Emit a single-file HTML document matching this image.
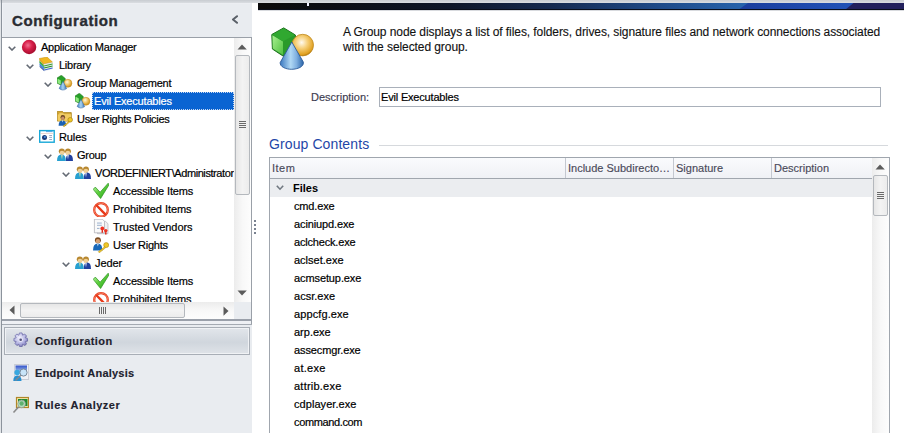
<!DOCTYPE html>
<html><head><meta charset="utf-8">
<style>
*{box-sizing:border-box;margin:0;padding:0}
html,body{width:904px;height:433px;overflow:hidden;background:#fff;font-family:"Liberation Sans",sans-serif;font-size:11px;color:#000}
.a{position:absolute;white-space:nowrap}
.tr{position:absolute;height:18px;line-height:18px;white-space:nowrap;letter-spacing:-0.25px;color:#000;-webkit-text-stroke:0.2px #000}
.sel{-webkit-text-stroke:0.2px #fff}
.chev{position:absolute;width:8px;height:5px}
.sel{background:#0a64d2;color:#fff;outline:1px dotted #c8d8f0;outline-offset:-1px;padding-left:2px}
.ico{position:absolute;width:16px;height:16px}
.desc{left:343px;font-size:12px;line-height:15px;color:#111;letter-spacing:-0.08px;-webkit-text-stroke:0.12px #111}
.fr{position:absolute;height:18px;line-height:18px;letter-spacing:-0.15px;color:#000;-webkit-text-stroke:0.2px #000}
.hc{position:absolute;line-height:18px;color:#4a4a5a;letter-spacing:-0.2px;-webkit-text-stroke:0.15px #4a4a5a}
.nav{position:absolute;font-weight:bold;font-size:11px;line-height:16px;color:#1e222e;letter-spacing:0.22px;-webkit-text-stroke:0.15px #1e222e}
</style></head><body>
<svg width="0" height="0" style="position:absolute">
<defs>
<radialGradient id="gRed" cx="0.42" cy="0.38" r="0.65"><stop offset="0" stop-color="#f07090"/><stop offset="0.45" stop-color="#d8204a"/><stop offset="1" stop-color="#a00a2a"/></radialGradient>
<radialGradient id="gGold" cx="0.4" cy="0.35" r="0.65"><stop offset="0" stop-color="#fff6dc"/><stop offset="0.5" stop-color="#f2c868"/><stop offset="1" stop-color="#d09018"/></radialGradient>
<linearGradient id="gCone" x1="0" x2="1"><stop offset="0" stop-color="#3f7fc0"/><stop offset="0.5" stop-color="#a8d4f4"/><stop offset="1" stop-color="#3a70b0"/></linearGradient>
<linearGradient id="gCheck" x1="0" y1="0" x2="1" y2="1"><stop offset="0" stop-color="#c8f8b0"/><stop offset="0.45" stop-color="#60d040"/><stop offset="1" stop-color="#20a010"/></linearGradient>
<symbol id="iApp" viewBox="0 0 16 16"><circle cx="8.1" cy="8" r="7.2" fill="url(#gRed)"/></symbol>
<symbol id="iBooks" viewBox="0 0 16 16">
<path d="M0.3 1.5 L8.1 0 L13.6 5.1 L13.6 12 L5.2 14.2 L0.6 9.5Z" fill="#e8e8ec"/>
<path d="M0.3 1.5 L8.1 0 L13.4 5 L4.6 6.8Z" fill="#f0b820" stroke="#c89010" stroke-width=".5"/>
<path d="M0.3 1.6 L4.6 6.8 L5 8.2 L0.5 3.5Z" fill="#e0a010"/>
<path d="M0.4 3.8 L5 8.6 L5 10.2 L0.5 6Z" fill="#30a830"/>
<path d="M0.5 6.2 L5 10.6 L5.1 12.2 L0.6 8.2Z" fill="#2a80e0"/>
<path d="M0.6 8.4 L5.1 12.4 L5.2 14.2 L0.7 10Z" fill="#4060b0"/>
<path d="M5 8.4 L13.6 6.4 L13.6 7.4 L5 9.4Z" fill="#30a030"/>
<path d="M5 10.4 L13.6 8.4 L13.6 9.4 L5 11.4Z" fill="#209020"/>
<path d="M5.1 12.4 L13.6 10.4 L13.6 11.6 L5.2 13.6Z" fill="#3a6ad0"/>
</symbol>
<symbol id="iGrp" viewBox="0 0 16 16">
<path d="M0 3 L4.4 0.2 L8.3 3.5 L8.3 8.5 L3.5 9.9 L0 8.1Z" fill="#28a028" stroke="#1a6a1a" stroke-width=".5"/>
<path d="M0.5 3.5 L3.8 5.5 L3.8 9.4 L0.5 7.9Z" fill="#90e880"/>
<circle cx="10.9" cy="8.3" r="4" fill="url(#gGold)" stroke="#c08a20" stroke-width=".5"/>
<path d="M6 6.2 L2.1 13.4 Q5.8 16.6 9.7 13.6Z" fill="url(#gCone)" stroke="#3060a0" stroke-width=".5"/>
</symbol>
<symbol id="iPol" viewBox="0 0 16 16">
<path d="M0.3 0.3 h5 l1.2 1.3 h7.8 v8.5 h-14z" fill="#d8a830" stroke="#a07810" stroke-width=".7"/>
<path d="M2 1.8 h4 l1 1 h6.8 v7 h-11.8z" fill="#f0d070" stroke="#c09020" stroke-width=".4"/>
<path d="M0.8 3.4 h13.2 v6.4 h-13.2z" fill="#f2cc60"/>
<circle cx="5.8" cy="6.4" r="2.3" fill="#6a4420"/>
<circle cx="5.8" cy="7.3" r="1.7" fill="#c89068"/>
<path d="M1.6 14.8 Q1.6 9.4 5.5 9.4 Q9.2 9.4 9.2 14.8Z" fill="#1a62b4"/>
<path d="M5 9.5 L6.1 9.5 L5.5 11.5Z" fill="#fff"/>
<circle cx="13.2" cy="8.8" r="2.3" fill="#f0c828" stroke="#a88010" stroke-width=".7"/>
<path d="M11.8 10.3 L6.2 15 L7 15.8 L12.6 11.1Z" fill="#f0c828" stroke="#a88010" stroke-width=".5"/>
</symbol>
<symbol id="iRules" viewBox="0 0 16 16">
<rect x="0.7" y="1.6" width="14.5" height="11.6" fill="#fff" stroke="#18a8d8" stroke-width="1.4"/>
<rect x="1.4" y="4" width="13.1" height="0.7" fill="#e0c8c0"/>
<rect x="7" y="2.3" width="6.6" height="0.8" fill="#2890e0"/>
<circle cx="5.5" cy="8.4" r="2.5" fill="#1a3a78"/>
<circle cx="5.9" cy="8" r="1" fill="#4a90e0"/>
<rect x="10.2" y="6.1" width="2.8" height="0.9" fill="#8aa0c0"/><rect x="10.2" y="7.9" width="2.8" height="0.9" fill="#8aa0c0"/><rect x="10.2" y="10" width="2.8" height="0.9" fill="#8aa0c0"/>
</symbol>
<symbol id="iPeople" viewBox="0 0 16 16">
<ellipse cx="4.8" cy="4.3" rx="3" ry="2.8" fill="#b88830"/>
<ellipse cx="11" cy="4.3" rx="2.9" ry="2.8" fill="#b88830"/>
<circle cx="5" cy="6" r="2.3" fill="#f0d098"/>
<circle cx="10.9" cy="6" r="2.3" fill="#f0d098"/>
<path d="M0 14 Q0 7.6 4.6 7.6 Q8.8 7.6 8.8 14Z" fill="#28a0d0"/>
<path d="M8.8 14 Q8.8 7.6 12.2 7.6 Q16 7.6 16 14Z" fill="#2040a0"/>
<path d="M4.2 7.8 L5.6 7.8 L5 12.5Z" fill="#f8e8a0"/><path d="M10.3 7.8 L11.7 7.8 L11 12.5Z" fill="#fff"/>
</symbol>
<symbol id="iCheck" viewBox="0 0 16 16">
<path d="M0.2 6.3 L2.3 4.1 L7.1 9.2 L15.2 0.2 L15.9 2 L7.6 15.5 Z" fill="url(#gCheck)" stroke="#2a9020" stroke-width=".7" stroke-linejoin="round"/>
</symbol>
<symbol id="iProh" viewBox="0 0 16 16">
<circle cx="8" cy="8.9" r="6.8" fill="#fff" stroke="#e83818" stroke-width="2.2"/>
<circle cx="8" cy="8.9" r="6.8" fill="none" stroke="#ffb8a0" stroke-width=".5"/>
<path d="M3.2 4 L12.8 13.8" stroke="#e83818" stroke-width="2.4"/>
</symbol>
<symbol id="iTrust" viewBox="0 0 16 16">
<path d="M4.5 2.4 h8 l2.5 2.3 v10 h-10.5z" fill="#f0f0f2" stroke="#a8a8b0" stroke-width=".6"/>
<path d="M1.4 0.2 h8 l2.1 2.1 v11.5 h-10.1z" fill="#fafafa" stroke="#9a9aa2" stroke-width=".6"/>
<rect x="4" y="3.6" width="4.8" height=".9" fill="#90a8c8"/><rect x="4" y="5.8" width="4.8" height=".9" fill="#90a8c8"/><rect x="4" y="8.9" width="2.5" height=".9" fill="#90a8c8"/>
<circle cx="9.3" cy="9.4" r="1.9" fill="#f03020"/>
<path d="M8.7 10.5 L8.5 13.8 L10.1 13.8 L9.9 10.5Z" fill="#e02818"/>
<circle cx="12.8" cy="11.6" r="1.7" fill="#f03020"/>
<path d="M12.2 12.6 L12 15.5 L13.6 15.5 L13.4 12.6Z" fill="#e02818"/>
</symbol>
<symbol id="iRight" viewBox="0 0 16 16">
<circle cx="4.9" cy="3.2" r="3" fill="#7a4a20"/>
<circle cx="4.9" cy="4.2" r="2.2" fill="#d8a070"/>
<path d="M0 13.5 Q0 6.6 4.8 6.6 Q9.4 6.6 9.4 13.5Z" fill="#1a68b8"/>
<path d="M4.2 6.8 L5.6 6.8 L4.9 9.5Z" fill="#fff"/>
<circle cx="13.2" cy="8.1" r="2.5" fill="#f0c828" stroke="#b08a10" stroke-width=".6"/>
<path d="M11.6 9.8 L5.3 14.7 L6.3 15.8 L12.6 10.8Z" fill="#f0c828" stroke="#b08a10" stroke-width=".5"/>
</symbol>
<symbol id="iChev" viewBox="0 0 8 5"><path d="M0.7 0.7 L4 4 L7.3 0.7" fill="none" stroke="#646a74" stroke-width="1.6"/></symbol>
<radialGradient id="gGoldB" cx="0.45" cy="0.38" r="0.62"><stop offset="0" stop-color="#fffaf0"/><stop offset="0.45" stop-color="#f6cf78"/><stop offset="0.9" stop-color="#e0a020"/><stop offset="1" stop-color="#b07810"/></radialGradient>
<linearGradient id="gConeB" x1="0" x2="1"><stop offset="0" stop-color="#3a78c0"/><stop offset="0.45" stop-color="#b0d8f4"/><stop offset="0.7" stop-color="#80b0e0"/><stop offset="1" stop-color="#2a64a8"/></linearGradient>
<linearGradient id="gCubeL" x1="0" y1="0" x2="1" y2="1"><stop offset="0" stop-color="#a8f090"/><stop offset="1" stop-color="#50c040"/></linearGradient>
<radialGradient id="gGear" cx="0.4" cy="0.35" r="0.7"><stop offset="0" stop-color="#f0f0fc"/><stop offset="0.6" stop-color="#b8b8e4"/><stop offset="1" stop-color="#7a78b8"/></radialGradient>
<linearGradient id="gScreen" x1="0" y1="0" x2="0" y2="1"><stop offset="0" stop-color="#3050c8"/><stop offset="1" stop-color="#a8c8f0"/></linearGradient>
<symbol id="iGrpBig" viewBox="0 0 52 48">
<path d="M5.8 10.5 L17.7 3.9 L29.4 11 L29.4 24 L17 32 L6.4 25Z" fill="#2a9a2a" stroke="#1a701a" stroke-width="1"/>
<path d="M6.4 11.3 L17 17.5 L17 31 L6.8 24.5Z" fill="url(#gCubeL)"/>
<path d="M6.4 10.6 L17.7 4.5 L28.8 11 L17 17.3Z" fill="#30a830"/>
<circle cx="36.7" cy="21.1" r="10.8" fill="url(#gGoldB)" stroke="#c08a20" stroke-width="0.8"/>
<path d="M25.8 18 L14.2 38.5 C13.6 42.8 20 45.4 25.8 45.3 C31.6 45.2 38 42.8 37.4 38.2Z" fill="url(#gConeB)" stroke="#2a5a98" stroke-width="0.9"/>
</symbol>
<symbol id="iGear" viewBox="0 0 17 17">
<g transform="translate(7.7 7.7)">
<path d="M-1.84 -4.54 L-1.32 -6.77 L1.32 -6.77 L1.84 -4.54 L1.91 -4.51 L3.86 -5.72 L5.72 -3.86 L4.51 -1.91 L4.54 -1.84 L6.77 -1.32 L6.77 1.32 L4.54 1.84 L4.51 1.91 L5.72 3.86 L3.86 5.72 L1.91 4.51 L1.84 4.54 L1.32 6.77 L-1.32 6.77 L-1.84 4.54 L-1.91 4.51 L-3.86 5.72 L-5.72 3.86 L-4.51 1.91 L-4.54 1.84 L-6.77 1.32 L-6.77 -1.32 L-4.54 -1.84 L-4.51 -1.91 L-5.72 -3.86 L-3.86 -5.72 L-1.91 -4.51Z" transform="translate(0.6 0.6)" fill="#6a6890" opacity=".45"/>
<path d="M-1.84 -4.54 L-1.32 -6.77 L1.32 -6.77 L1.84 -4.54 L1.91 -4.51 L3.86 -5.72 L5.72 -3.86 L4.51 -1.91 L4.54 -1.84 L6.77 -1.32 L6.77 1.32 L4.54 1.84 L4.51 1.91 L5.72 3.86 L3.86 5.72 L1.91 4.51 L1.84 4.54 L1.32 6.77 L-1.32 6.77 L-1.84 4.54 L-1.91 4.51 L-3.86 5.72 L-5.72 3.86 L-4.51 1.91 L-4.54 1.84 L-6.77 1.32 L-6.77 -1.32 L-4.54 -1.84 L-4.51 -1.91 L-5.72 -3.86 L-3.86 -5.72 L-1.91 -4.51Z" fill="url(#gGear)" stroke="#6a68a8" stroke-width=".7"/>
<circle r="2.2" fill="#e8e8f8"/>
<circle r="1.3" fill="#505078"/>
</g>
</symbol>
<symbol id="iEnd" viewBox="0 0 17 17">
<rect x="2.7" y="0.5" width="14" height="15" fill="#f0f2f6" stroke="#c0c4cc" stroke-width=".8"/>
<rect x="3.5" y="1.5" width="11.5" height="6.5" fill="url(#gScreen)"/>
<circle cx="5.2" cy="8.5" r="2.8" fill="#38a8e0"/>
<path d="M1.3 17 Q1.3 11.5 5.5 11.5 Q9.5 11.5 9.5 17Z" fill="#2890d0"/>
<circle cx="11.5" cy="8.5" r="3.6" fill="#c8e4f8" stroke="#7a8a9a" stroke-width="1"/>
<path d="M8.8 11.3 L3.5 16.5" stroke="#808890" stroke-width="1.4"/>
</symbol>
<symbol id="iRA" viewBox="0 0 17 18">
<rect x="4.5" y="1.5" width="12" height="10" fill="#f8e8a8" stroke="#b0862a" stroke-width="1.2"/>
<rect x="6" y="3" width="9.5" height="7" fill="#208a30"/>
<circle cx="9.6" cy="7.9" r="3.8" fill="#b8e0c0" stroke="#8a9a90" stroke-width=".8"/>
<circle cx="9.6" cy="7.5" r="2.2" fill="#60b070"/>
<path d="M6.5 11 L1.5 16.5" stroke="#8a8a8a" stroke-width="1.6"/>
</symbol>
</defs></svg>

<div class="a" style="left:0;top:0;width:252px;height:433px;background:#e9ecf0"></div>
<div class="a" style="left:0;top:0;width:1px;height:433px;background:#e2e5e8"></div>
<div class="a" style="left:0;top:0;width:904px;height:3px;background:linear-gradient(#c8ccd1,#dadde1)"></div>
<div class="a" style="left:2px;top:3px;width:250px;height:1px;background:#eceef2"></div>
<div class="a" style="left:2px;top:3px;width:1px;height:34px;background:#f0f2f6"></div>
<div class="a" style="left:1px;top:0;width:1px;height:433px;background:#8c939c"></div>
<div class="a" style="left:12px;top:10.5px;font-weight:bold;font-size:15px;line-height:20px;color:#2a2c32;letter-spacing:0.62px;-webkit-text-stroke:0.4px #2a2c32">Configuration</div>
<svg class="a" style="left:231px;top:15px" width="8" height="9"><path d="M6 1.2 L2 4.5 L6 7.8" fill="none" stroke="#5a6068" stroke-width="2" stroke-linecap="round" stroke-linejoin="round"/></svg>
<div class="a" style="left:2px;top:37px;width:250px;height:1px;background:#9aa0a8"></div>
<div class="a" style="left:251px;top:37px;width:1px;height:288px;background:#9aa0a8"></div>
<div class="a" style="left:2px;top:38px;width:249px;height:281px;background:#fff;overflow:hidden" id="tree">
<svg class="chev" style="left:6px;top:8px"><use href="#iChev"/></svg>
<svg class="ico" style="left:19px;top:1px"><use href="#iApp"/></svg>
<div class="tr" style="left:39px;top:0px;letter-spacing:-0.25px">Application Manager</div>
<svg class="chev" style="left:24px;top:26px"><use href="#iChev"/></svg>
<svg class="ico" style="left:37px;top:19px"><use href="#iBooks"/></svg>
<div class="tr" style="left:57px;top:18px;letter-spacing:-0.25px">Library</div>
<svg class="chev" style="left:42px;top:44px"><use href="#iChev"/></svg>
<svg class="ico" style="left:55px;top:37px"><use href="#iGrp"/></svg>
<div class="tr" style="left:75px;top:36px;letter-spacing:-0.22px">Group Management</div>
<svg class="ico" style="left:73px;top:55px"><use href="#iGrp"/></svg>
<div class="tr sel" style="left:90px;top:54px;width:142px;letter-spacing:-0.18px">Evil Executables</div>
<svg class="ico" style="left:55px;top:73px"><use href="#iPol"/></svg>
<div class="tr" style="left:75px;top:72px;letter-spacing:-0.3px">User Rights Policies</div>
<svg class="chev" style="left:24px;top:98px"><use href="#iChev"/></svg>
<svg class="ico" style="left:37px;top:91px"><use href="#iRules"/></svg>
<div class="tr" style="left:57px;top:90px;letter-spacing:-0.1px">Rules</div>
<svg class="chev" style="left:42px;top:116px"><use href="#iChev"/></svg>
<svg class="ico" style="left:55px;top:109px"><use href="#iPeople"/></svg>
<div class="tr" style="left:75px;top:108px;letter-spacing:-0.25px">Group</div>
<svg class="chev" style="left:60px;top:134px"><use href="#iChev"/></svg>
<svg class="ico" style="left:73px;top:127px"><use href="#iPeople"/></svg>
<div class="tr" style="left:93px;top:126px;letter-spacing:-0.42px">VORDEFINIERT\Administrator</div>
<svg class="ico" style="left:91px;top:145px"><use href="#iCheck"/></svg>
<div class="tr" style="left:111px;top:144px;letter-spacing:-0.15px">Accessible Items</div>
<svg class="ico" style="left:91px;top:163px"><use href="#iProh"/></svg>
<div class="tr" style="left:111px;top:162px;letter-spacing:-0.06px">Prohibited Items</div>
<svg class="ico" style="left:91px;top:181px"><use href="#iTrust"/></svg>
<div class="tr" style="left:111px;top:180px;letter-spacing:-0.05px">Trusted Vendors</div>
<svg class="ico" style="left:91px;top:199px"><use href="#iRight"/></svg>
<div class="tr" style="left:111px;top:198px;letter-spacing:-0.25px">User Rights</div>
<svg class="chev" style="left:60px;top:224px"><use href="#iChev"/></svg>
<svg class="ico" style="left:73px;top:217px"><use href="#iPeople"/></svg>
<div class="tr" style="left:93px;top:216px;letter-spacing:-0.1px">Jeder</div>
<svg class="ico" style="left:91px;top:235px"><use href="#iCheck"/></svg>
<div class="tr" style="left:111px;top:234px;letter-spacing:-0.15px">Accessible Items</div>
<svg class="ico" style="left:91px;top:253px"><use href="#iProh"/></svg>
<div class="tr" style="left:111px;top:252px;letter-spacing:-0.06px">Prohibited Items</div>
<div class="a" style="left:232px;top:0;width:17px;height:264px;background:linear-gradient(90deg,#ececec,#f8f8f8 50%,#fdfdfd)"></div>
<svg class="a" style="left:235px;top:6px" width="11" height="6"><path d="M0.5 5.5 L5 0.5 L9.8 5.5Z" fill="#5c5c5c"/></svg>
<div class="a" style="left:233px;top:17px;width:15px;height:140px;border:1px solid #b4b8bd;border-radius:2px;background:linear-gradient(90deg,#e6e6e6,#f3f3f3 50%,#ececec)"></div>
<div class="a" style="left:237px;top:83px;width:7px;height:1px;background:#6a6a6a;box-shadow:0 2px 0 #6a6a6a,0 4px 0 #6a6a6a,0 6px 0 #6a6a6a"></div>
<svg class="a" style="left:235px;top:252px" width="11" height="6"><path d="M0.5 0.5 L5 5.5 L9.8 0.5Z" fill="#5c5c5c"/></svg>
<div class="a" style="left:0;top:264px;width:232px;height:17px;background:linear-gradient(#ececec,#f8f8f8 50%,#fdfdfd)"></div>
<svg class="a" style="left:7px;top:267px" width="6" height="11"><path d="M5.5 0.5 L0.5 5 L5.5 9.8Z" fill="#5c5c5c"/></svg>
<div class="a" style="left:18px;top:265px;width:165px;height:15px;border:1px solid #b4b8bd;border-radius:2px;background:linear-gradient(#e6e6e6,#f3f3f3 50%,#ececec)"></div>
<div class="a" style="left:97px;top:269px;width:1px;height:7px;background:#6a6a6a;box-shadow:2px 0 0 #6a6a6a,4px 0 0 #6a6a6a,6px 0 0 #6a6a6a"></div>
<svg class="a" style="left:221px;top:267.5px" width="6" height="11"><path d="M0.5 0.5 L5.5 5 L0.5 9.8Z" fill="#5c5c5c"/></svg>
<div class="a" style="left:232px;top:264px;width:17px;height:17px;background:#e9ecf0"></div>
</div>
<div class="a" style="left:2px;top:319px;width:250px;height:2px;background:#9aa0aa"></div>
<div class="a" style="left:2px;top:321px;width:249px;height:3px;background:#eef0f4"></div>
<div class="a" style="left:2px;top:324px;width:250px;height:1px;background:#a4aab2"></div>
<div class="a" style="left:4px;top:327px;width:246px;height:28px;border:1px solid #a8aeb6;background:linear-gradient(#e2e6eb,#d0d6dd 55%,#dfe3e8);box-shadow:inset 0 0 0 1px #f0f2f5"></div>
<svg class="a" style="left:13px;top:332px" width="17" height="17"><use href="#iGear"/></svg>
<div class="nav" style="left:35px;top:333px;letter-spacing:0.42px">Configuration</div>
<svg class="a" style="left:12px;top:364px" width="17" height="17"><use href="#iEnd"/></svg>
<div class="nav" style="left:35px;top:365px">Endpoint Analysis</div>
<svg class="a" style="left:12px;top:396px" width="17" height="18"><use href="#iRA"/></svg>
<div class="nav" style="left:35px;top:397px;letter-spacing:0.48px">Rules Analyzer</div>
<div class="a" style="left:258px;top:3px;width:646px;height:7px;background:linear-gradient(90deg,#0a0a0b 0%,#0b0d14 12%,#0e1628 30%,#15294e 45%,#1e4a88 62%,#2a6cb8 80%,#3080cc 100%)"></div>
<div class="a" style="left:738px;top:3px;width:166px;height:7px;clip-path:polygon(10px 0,100% 0,100% 100%,0 100%);background:linear-gradient(90deg,#1a3c9c,#2050b4 60%,#2458c0)"></div>
<div class="a" style="left:845px;top:3px;width:59px;height:7px;clip-path:polygon(8.5px 0,100% 0,100% 100%,0 100%);background:#22205c"></div>
<div class="a" style="left:258px;top:9px;width:646px;height:1px;background:#0a0e1a"></div>
<div class="a" style="left:258px;top:10px;width:646px;height:1px;background:#d8dade"></div>
<div class="a" style="left:307px;top:3px;width:2px;height:3px;background:#f0f0ff"></div>
<svg class="a" style="left:266px;top:24px" width="52" height="48"><use href="#iGrpBig"/></svg>
<div class="a desc" style="top:25px">A Group node displays a list of files, folders, drives, signature files and network connections associated</div>
<div class="a desc" style="top:40px">with the selected group.</div>
<div class="a" style="left:311px;top:88px;line-height:18px;color:#3c3c50;letter-spacing:0px;-webkit-text-stroke:0.15px #3c3c50">Description:</div>
<div class="a" style="left:379px;top:87px;width:502px;height:20px;border:1px solid #a9b0ba;background:#fff"></div>
<div class="a" style="left:381px;top:88px;line-height:18px;letter-spacing:-0.18px;-webkit-text-stroke:0.2px #000">Evil Executables</div>
<div class="a" style="left:269px;top:135px;font-size:14px;line-height:18px;color:#1f47a8;letter-spacing:0.1px">Group Contents</div>
<div class="a" style="left:379px;top:145px;width:509px;height:1px;background:#d6d9dd"></div>
<div class="a" style="left:269px;top:157px;width:621px;height:276px;border:1px solid #a0a6ae;border-bottom:none;background:#fff"></div>
<div class="a" style="left:270px;top:158px;width:602px;height:20px;background:linear-gradient(#fafbfd,#eff1f5)"></div>
<div class="a" style="left:270px;top:178px;width:602px;height:1px;background:#a0a6ae"></div>
<div class="a" style="left:565px;top:158px;width:1px;height:20px;background:#c4c8d0"></div>
<div class="a" style="left:673px;top:158px;width:1px;height:20px;background:#c4c8d0"></div>
<div class="a" style="left:771px;top:158px;width:1px;height:20px;background:#c4c8d0"></div>
<div class="hc" style="left:272px;top:159px;letter-spacing:0.5px">Item</div>
<div class="hc" style="left:568px;top:159px;letter-spacing:0px">Include Subdirecto…</div>
<div class="hc" style="left:676px;top:159px;letter-spacing:0px">Signature</div>
<div class="hc" style="left:774px;top:159px;letter-spacing:0px">Description</div>
<div class="a" style="left:270px;top:179px;width:602px;height:18px;background:#ebedf0"></div>
<svg class="a" style="left:276px;top:185px" width="8" height="6"><path d="M0.8 0.8 L4 4.2 L7.2 0.8" fill="none" stroke="#707880" stroke-width="1.6"/></svg>
<div class="a" style="left:293px;top:179px;line-height:18px;font-weight:bold;color:#000">Files</div>
<div class="fr" style="left:294px;top:197px;letter-spacing:-0.15px">cmd.exe</div>
<div class="fr" style="left:294px;top:215px;letter-spacing:-0.12px">aciniupd.exe</div>
<div class="fr" style="left:294px;top:233px;letter-spacing:-0.18px">aclcheck.exe</div>
<div class="fr" style="left:294px;top:251px;letter-spacing:0.00px">aclset.exe</div>
<div class="fr" style="left:294px;top:269px;letter-spacing:-0.10px">acmsetup.exe</div>
<div class="fr" style="left:294px;top:287px;letter-spacing:0.02px">acsr.exe</div>
<div class="fr" style="left:294px;top:305px;letter-spacing:0.10px">appcfg.exe</div>
<div class="fr" style="left:294px;top:323px;letter-spacing:0.00px">arp.exe</div>
<div class="fr" style="left:294px;top:341px;letter-spacing:-0.11px">assecmgr.exe</div>
<div class="fr" style="left:294px;top:359px;letter-spacing:0.27px">at.exe</div>
<div class="fr" style="left:294px;top:377px;letter-spacing:0.23px">attrib.exe</div>
<div class="fr" style="left:294px;top:395px;letter-spacing:0.06px">cdplayer.exe</div>
<div class="fr" style="left:294px;top:413px;letter-spacing:-0.37px">command.com</div>
<div class="a" style="left:872px;top:158px;width:17px;height:275px;background:linear-gradient(90deg,#ececec,#f8f8f8 50%,#fdfdfd)"></div>
<svg class="a" style="left:875px;top:164px" width="11" height="6"><path d="M0.5 5.5 L5 0.5 L9.8 5.5Z" fill="#5c5c5c"/></svg>
<div class="a" style="left:873px;top:175px;width:15px;height:41px;border:1px solid #b4b8bd;border-radius:2px;background:linear-gradient(90deg,#e6e6e6,#f3f3f3 50%,#ececec)"></div>
<div class="a" style="left:877px;top:192px;width:7px;height:1px;background:#6a6a6a;box-shadow:0 2px 0 #6a6a6a,0 4px 0 #6a6a6a,0 6px 0 #6a6a6a"></div>
<div class="a" style="left:254px;top:220px;width:2px;height:2px;background:#7a8290"></div>
<div class="a" style="left:254px;top:224px;width:2px;height:2px;background:#7a8290"></div>
<div class="a" style="left:254px;top:228px;width:2px;height:2px;background:#7a8290"></div>
<div class="a" style="left:254px;top:232px;width:2px;height:2px;background:#7a8290"></div>
</body></html>
